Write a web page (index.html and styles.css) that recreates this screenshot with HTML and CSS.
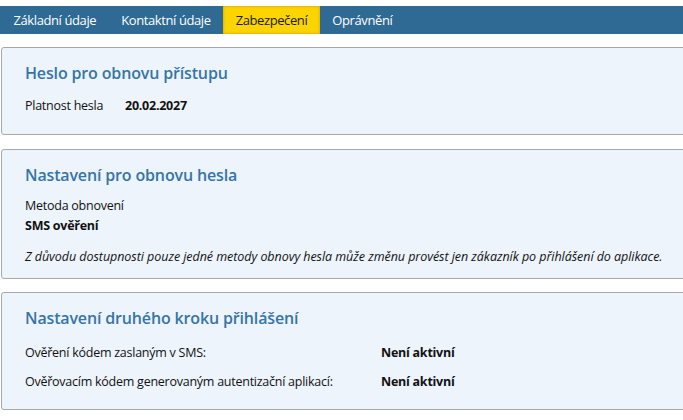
FILE: index.html
```html
<!DOCTYPE html>
<html lang="cs">
<head>
<meta charset="utf-8">
<title>Zabezpečení</title>
<link rel="stylesheet" href="styles.css">
</head>
<body>
<nav class="tabs">
  <a class="tab">Základní údaje</a>
  <a class="tab">Kontaktní údaje</a>
  <a class="tab active">Zabezpečení</a>
  <a class="tab">Oprávnění</a>
</nav>

<section class="card card-pass">
  <h2>Heslo pro obnovu přístupu</h2>
  <div class="pair">
    <span class="label">Platnost hesla</span>
    <strong class="value">20.02.2027</strong>
  </div>
</section>

<section class="card card-recovery">
  <h2>Nastavení pro obnovu hesla</h2>
  <div class="field-label">Metoda obnovení</div>
  <div class="field-value">SMS ověření</div>
  <p class="note">Z důvodu dostupnosti pouze jedné metody obnovy hesla může změnu provést jen zákazník po přihlášení do aplikace.</p>
</section>

<section class="card card-2fa">
  <h2>Nastavení druhého kroku přihlášení</h2>
  <div class="rows">
    <span class="label">Ověření kódem zaslaným v SMS:</span>
    <strong class="value">Není aktivní</strong>
    <span class="label">Ověřovacím kódem generovaným autentizační aplikací:</span>
    <strong class="value">Není aktivní</strong>
  </div>
</section>
</body>
</html>
```

FILE: styles.css
```css
html {
  overflow: hidden;
}

body {
  margin: 0;
  background: #ffffff;
  color: #111111;
  font-family: "Open Sans", "Noto Sans", sans-serif;
  font-size: 12.5px;
  letter-spacing: -0.25px;
}

/* top tab strip */
.tabs {
  margin-top: 6px;
  height: 28px;
  display: flex;
  padding-left: 1px;
  background: #2e6a94;
}

.tab {
  display: flex;
  align-items: center;
  padding: 0 12.5px;
  color: #ffffff;
  font-size: 13px;
  letter-spacing: -0.4px;
}

.tab.active {
  background: #fcd400;
  color: #1a1a1a;
  box-shadow: inset 0 0 3px rgba(150, 110, 0, 0.5);
}

/* content panels */
.card {
  border: 1px solid #a8a8a8;
  border-radius: 3px;
  background: #eef4fc;
  padding: 13px 23px 19px;
  margin-right: -6px;
  margin-left: 1px;
}

.card h2 {
  margin: 0;
  font-size: 16px;
  font-weight: 600;
  letter-spacing: -0.15px;
  color: #3575a9;
  line-height: 24px;
}

.card-pass {
  margin-top: 13px;
}

.card-pass h2 {
  margin-bottom: 12px;
}

.pair {
  display: flex;
  line-height: 18px;
}

.pair .label {
  width: 100px;
}

.value {
  font-weight: 700;
}

.card-recovery {
  margin-top: 14px;
  padding-bottom: 12px;
}

.card-recovery h2 {
  margin-bottom: 8.5px;
}

.field-label,
.field-value {
  line-height: 20px;
}

.field-value {
  font-weight: 700;
}

.note {
  margin: 12.5px 0 0;
  font-style: italic;
  letter-spacing: -0.05px;
  line-height: 18px;
}

.card-2fa {
  margin-top: 13px;
  padding-bottom: 18px;
}

.card-2fa h2 {
  margin-bottom: 14px;
}

.rows {
  display: grid;
  grid-template-columns: 356px auto;
  row-gap: 11px;
  line-height: 18px;
}
```
